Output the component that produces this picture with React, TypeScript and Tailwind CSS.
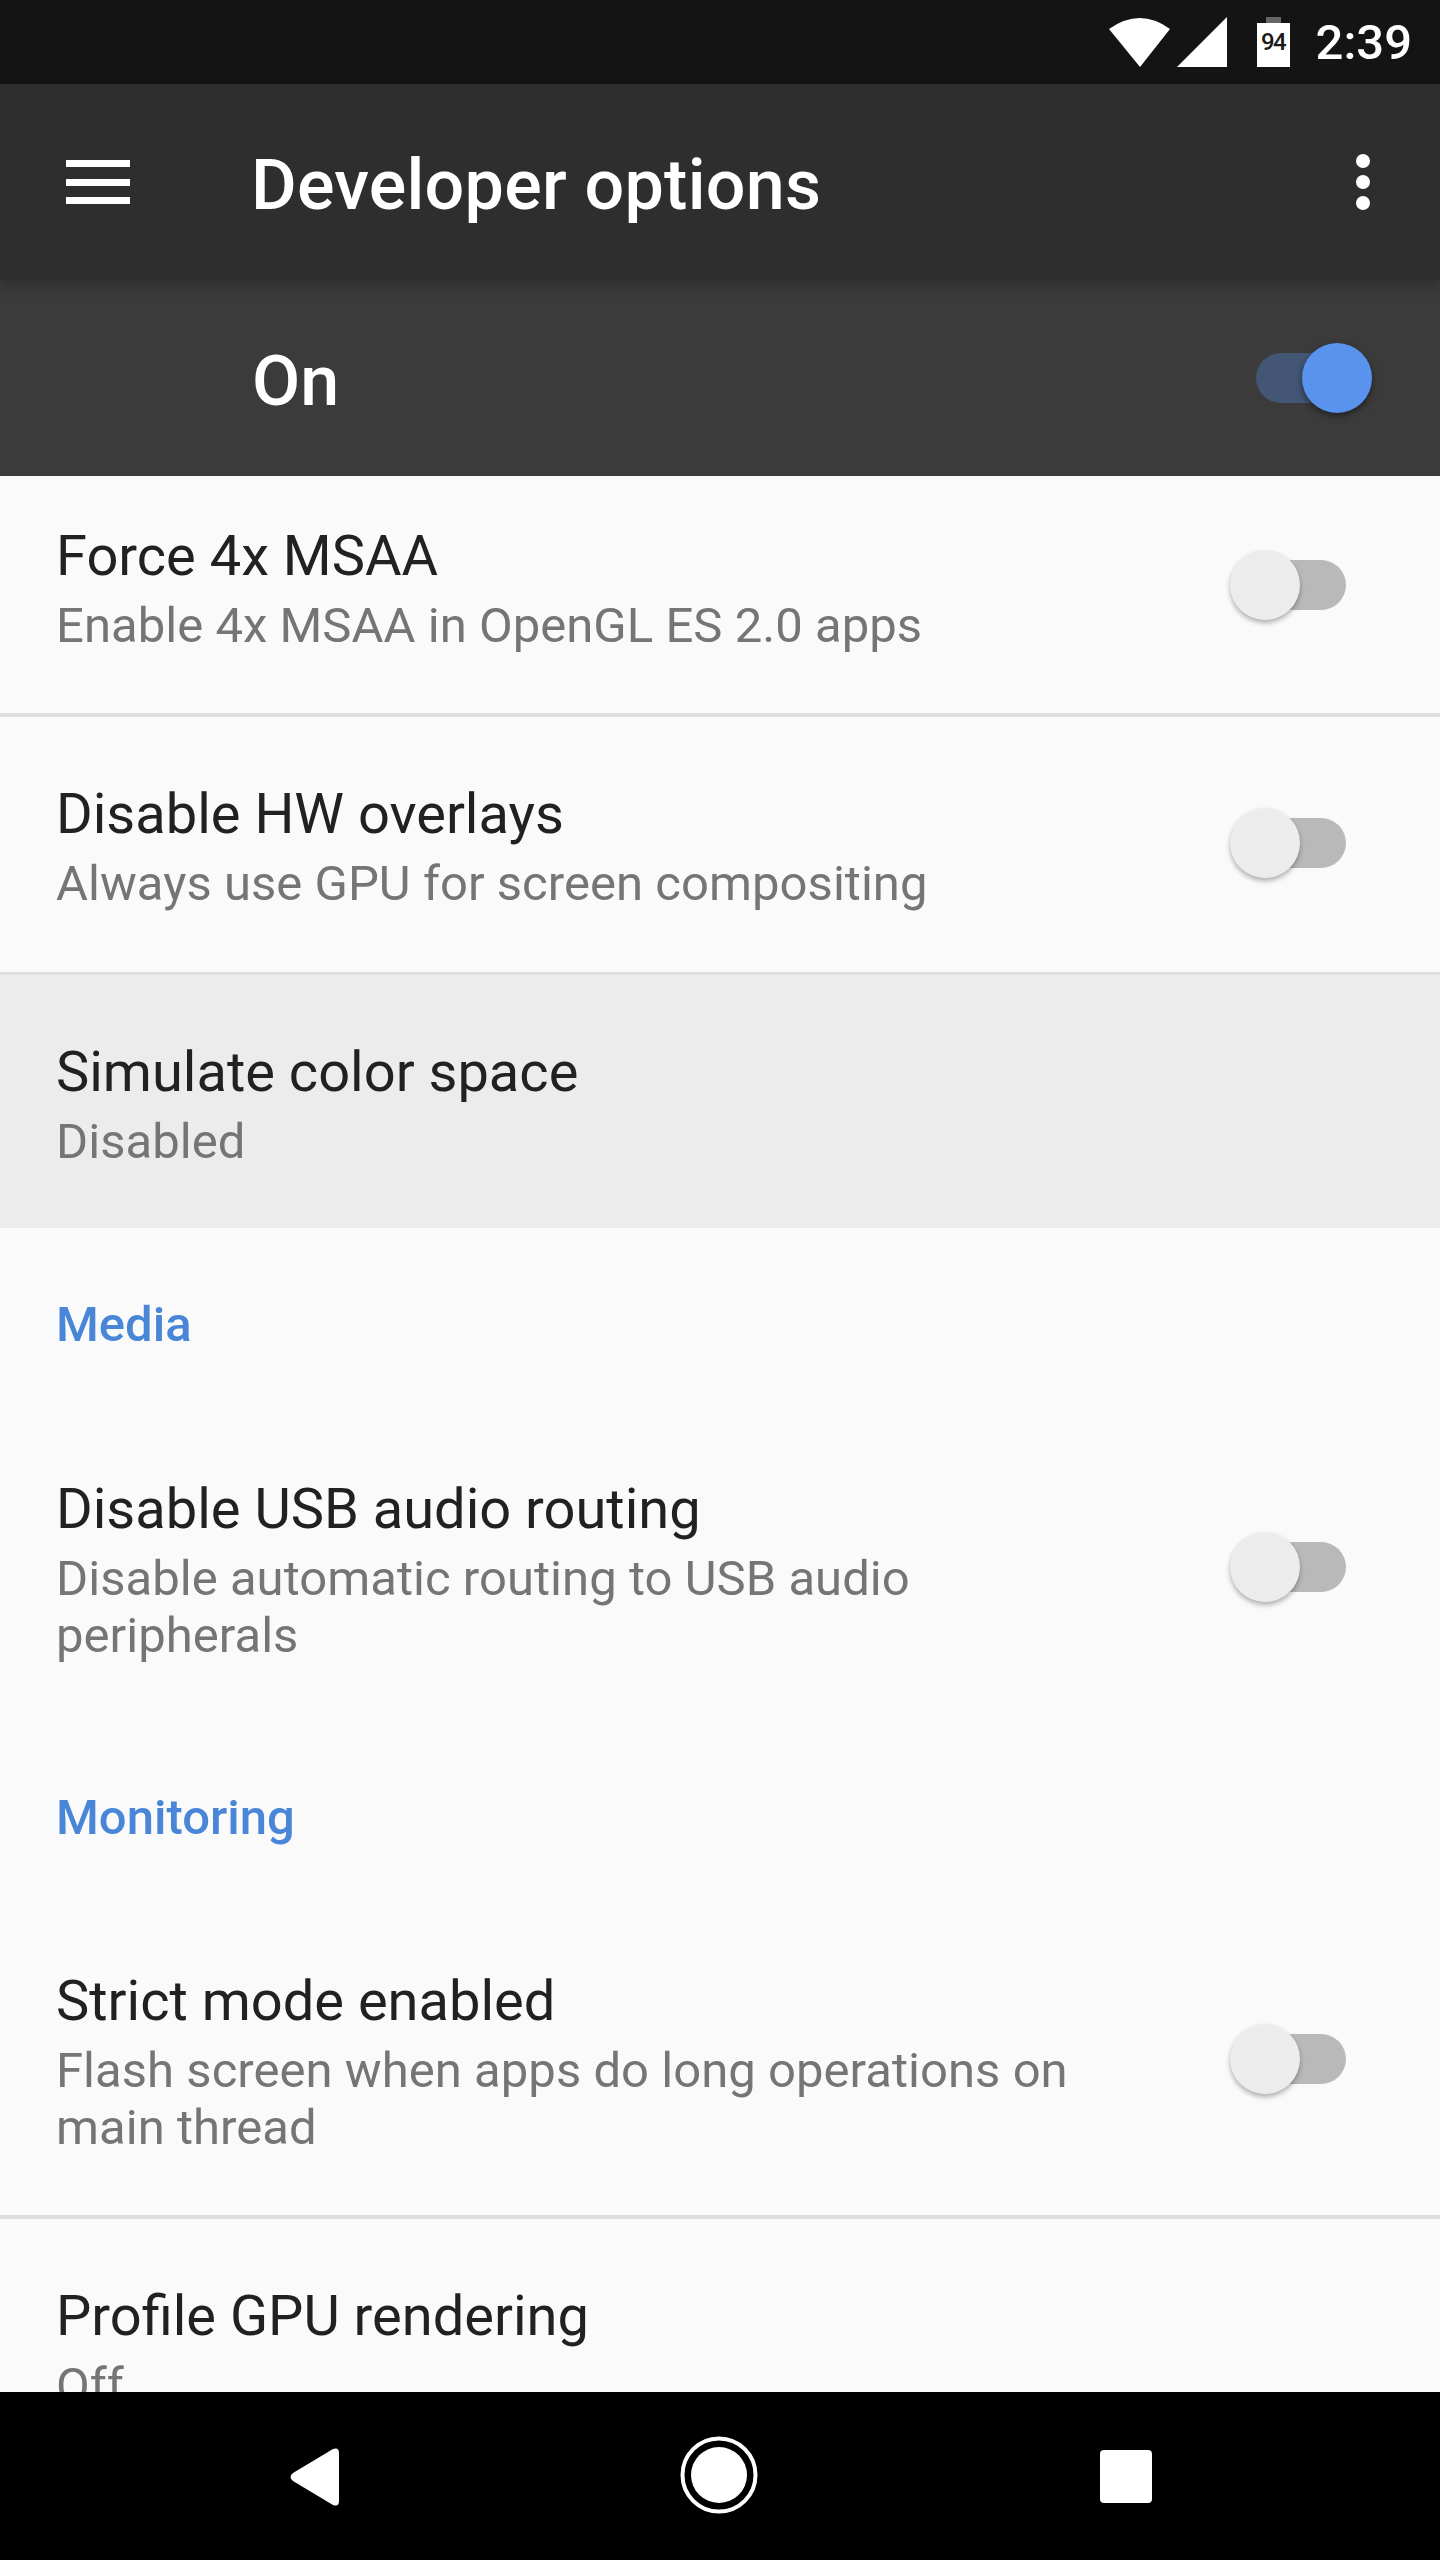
import React from "react";

function Toggle({ on = false }: { on?: boolean }) {
  if (on) {
    return (
      <div className="relative h-[70px] w-[116px] shrink-0">
        <div className="absolute left-0 top-[10px] h-[50px] w-[100px] rounded-full bg-[#435673]" />
        <div className="absolute right-0 top-0 h-[70px] w-[70px] rounded-full bg-[#5a93ee] shadow-[0_3px_6px_rgba(0,0,0,0.45)]" />
      </div>
    );
  }
  return (
    <div className="relative mt-[-2px] h-[70px] w-[116px] shrink-0">
      <div className="absolute right-0 top-[10px] h-[50px] w-[92px] rounded-full bg-[#b9b9b9]" />
      <div className="absolute left-0 top-0 h-[70px] w-[70px] rounded-full bg-[#ececec] shadow-[0_3px_5px_rgba(0,0,0,0.3)]" />
    </div>
  );
}

function Row({
  title,
  sub,
  toggle,
  className,
}: {
  title: string;
  sub: React.ReactNode;
  toggle?: boolean;
  className: string;
}) {
  return (
    <div className={className}>
      <div className="flex items-center pl-[56px] pr-[94px]">
        <div className="flex-1">
          <div className="text-[56px] leading-[76px] text-[#212121]">{title}</div>
          <div className="mt-[3px] text-[49px] leading-[57px] tracking-[0.04px] text-[#757575]">{sub}</div>
        </div>
        {toggle && <Toggle />}
      </div>
    </div>
  );
}

function Section({ title, className }: { title: string; className: string }) {
  return (
    <div className={className}>
      <div className="pl-[56px] text-[49px] font-medium leading-[57px] text-[#4a86d8]">{title}</div>
    </div>
  );
}

export default function App() {
  return (
    <div className="flex h-[2560px] w-[1440px] flex-col overflow-hidden bg-[#fafafa] font-['Roboto',sans-serif]">
      <div className="flex h-[84px] shrink-0 items-center justify-end bg-[#141414] pr-[28px]">
        <svg width="64" height="50" viewBox="0 0 64 50" className="mr-[5px] mt-[-1px]">
          <path d="M1 12 Q32 -10 62 12 L32 50 Z" fill="#fff" />
        </svg>
        <svg width="50" height="50" viewBox="0 0 50 50" className="mt-[-1px]">
          <path d="M0 50 L50 0 V50 Z" fill="#fff" />
        </svg>
        <div className="relative ml-[30px] mt-[-1px] h-[50px] w-[33px]">
          <div className="absolute left-[9px] top-0 h-[6px] w-[15px] bg-[#666]" />
          <div className="absolute bottom-0 left-0 right-0 top-[6px] bg-white text-center text-[24px] font-medium leading-[38px] tracking-[-1.5px] text-[#1a1a1a]">
            94
          </div>
        </div>
        <div className="ml-[26px] text-[49px] font-medium leading-[57px] text-white">2:39</div>
      </div>

      <div className="relative z-10 flex h-[196px] shrink-0 items-center bg-[#2e2e2e] pl-[66px] pr-[70px] shadow-[0_4px_14px_rgba(0,0,0,0.25)]">
        <div className="flex h-[44px] w-[64px] flex-col justify-between">
          <div className="h-[7px] bg-white" />
          <div className="h-[7px] bg-white" />
          <div className="h-[7px] bg-white" />
        </div>
        <div className="ml-[121px] mt-[6px] flex-1 text-[70px] font-medium leading-[82px] tracking-[0.25px] text-white">Developer options</div>
        <div className="flex h-[56px] flex-col justify-between">
          <div className="h-[14px] w-[14px] rounded-full bg-white" />
          <div className="h-[14px] w-[14px] rounded-full bg-white" />
          <div className="h-[14px] w-[14px] rounded-full bg-white" />
        </div>
      </div>

      <div className="flex h-[196px] shrink-0 items-center bg-[#3b3b3b] pl-[252px] pr-[68px]">
        <div className="mt-[6px] flex-1 text-[70px] font-medium leading-[82px] text-white">On</div>
        <Toggle on />
      </div>

      <div className="min-h-0 flex-1 overflow-hidden">
        <Row
          className="h-[241px] border-b-4 border-[#dedede] pt-[42px]"
          title="Force 4x MSAA"
          sub="Enable 4x MSAA in OpenGL ES 2.0 apps"
          toggle
        />
        <Row
          className="h-[258px] border-b-[3px] border-[#dedede] pt-[59px]"
          title="Disable HW overlays"
          sub="Always use GPU for screen compositing"
          toggle
        />
        <Row className="h-[253px] bg-[#ececec] pt-[59px]" title="Simulate color space" sub="Disabled" />
        <Section className="h-[243px] pt-[68px]" title="Media" />
        <Row
          className="h-[247px]"
          title="Disable USB audio routing"
          sub={
            <>
              Disable automatic routing to USB audio
              <br />
              peripherals
            </>
          }
          toggle
        />
        <Section className="h-[245px] pt-[71px]" title="Monitoring" />
        <Row
          className="h-[256px] border-b-4 border-[#dedede]"
          title="Strict mode enabled"
          sub={
            <>
              Flash screen when apps do long operations on
              <br />
              main thread
            </>
          }
          toggle
        />
        <Row className="h-[258px] pt-[59px]" title="Profile GPU rendering" sub="Off" />
      </div>

      <div className="flex h-[168px] shrink-0 items-center justify-center bg-black pl-[2px]">
        <svg width="50" height="58" viewBox="0 0 50 58" className="mr-[340px] mt-[2px]">
          <path d="M43 1 Q49 -1 49 5 V53 Q49 59 43 57 L3 33 Q-2 29 3 25 Z" fill="#fff" />
        </svg>
        <svg width="78" height="78" viewBox="0 0 78 78" className="mt-[-2px]">
          <circle cx="39" cy="39" r="36.5" fill="none" stroke="#fff" strokeWidth="4" />
          <circle cx="39" cy="39" r="28" fill="#fff" />
        </svg>
        <div className="ml-[342px] h-[53px] w-[52px] rounded-[4px] bg-white" />
      </div>
    </div>
  );
}
